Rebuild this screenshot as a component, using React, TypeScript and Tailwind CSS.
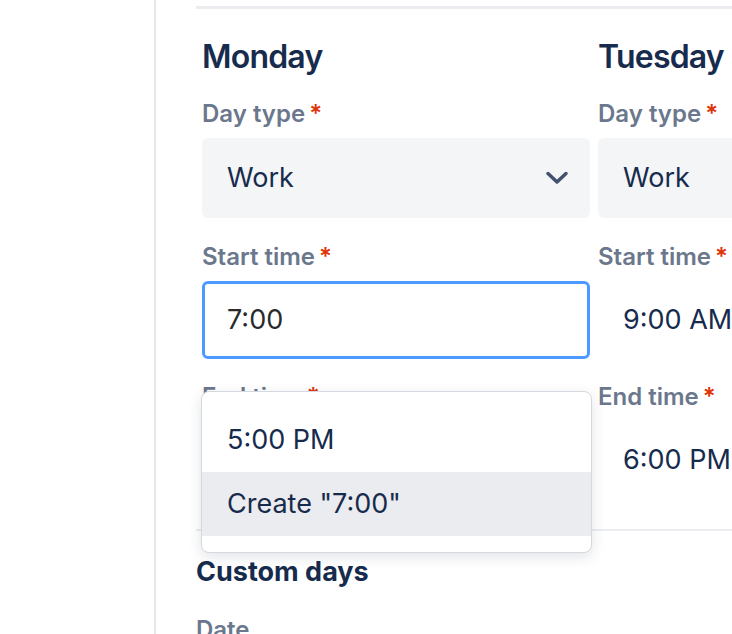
import React from 'react';

const font = { fontFamily: 'Inter, "Noto Sans", sans-serif' };

function Label({ text }: { text: string }) {
  return (
    <div className="h-[32px] mb-[8px] flex items-center text-[24px] font-semibold leading-[32px] text-[#6b778c]">
      {text}
      <span className="ml-[4px] text-[#de350b]">*</span>
    </div>
  );
}

function Chevron() {
  return (
    <svg width="24" height="24" viewBox="0 0 24 24" fill="none">
      <path d="M3 7.5 L12 16 L21 7.5" stroke="#42526e" strokeWidth="3.5" strokeLinecap="round" strokeLinejoin="round" />
    </svg>
  );
}

function DayColumn({ name, start, end, focused }: { name: string; start: string; end: string; focused?: boolean }) {
  return (
    <div className="w-[388px] shrink-0">
      <h2 className="mt-[2px] h-[48px] mb-[17px] text-[32px] leading-[48px] tracking-[-0.8px] font-semibold text-[#172b4d]">{name}</h2>

      {/* day type */}
      <Label text="Day type" />
      <div className="h-[80px] rounded-[6px] bg-[#f4f5f7] border-[3px] border-transparent pl-[22px] pr-[18px] flex items-center justify-between">
        <span className="text-[27px] text-[#172b4d]">Work</span>
        <Chevron />
      </div>

      {/* start time */}
      <div className="mt-[23px]">
        <Label text="Start time" />
        <div className="relative">
          {focused ? (
            <div className="h-[78px] rounded-[6px] bg-white border-[3px] border-[#4c9aff] pl-[22px] flex items-center">
              <span className="text-[27px] text-[#292a2e]">{start}</span>
            </div>
          ) : (
            <div className="h-[78px] rounded-[6px] border-[3px] border-transparent pl-[22px] flex items-center">
              <span className="text-[27px] text-[#172b4d] whitespace-nowrap">{start}</span>
            </div>
          )}
          {focused && (
            <div className="absolute z-10 top-[110px] left-[-1px] right-[-2px] rounded-[8px] bg-white border border-[#d5d8de] shadow-[0_4px_14px_rgba(9,30,66,0.12)] py-[16px] overflow-hidden">
              <div className="h-[64px] pl-[25px] flex items-center text-[27px] text-[#172b4d]">5:00 PM</div>
              <div className="h-[64px] pl-[25px] flex items-center text-[27px] text-[#172b4d] bg-[#ebecf0]">Create "7:00"</div>
            </div>
          )}
        </div>
      </div>

      {/* end time */}
      <div className="mt-[22px]">
        <Label text="End time" />
        <div className="h-[78px] rounded-[6px] border-[3px] border-transparent pl-[22px] flex items-center">
          <span className="text-[27px] text-[#172b4d] whitespace-nowrap">{end}</span>
        </div>
      </div>
    </div>
  );
}

export default function App() {
  return (
    <div className="w-[732px] h-[634px] overflow-hidden bg-white flex" style={font}>
      <div className="w-[154px] shrink-0" />
      <div className="w-[2px] shrink-0 bg-[#e6e7ea]" />
      <div className="flex-1 min-w-0 pl-[40px] pt-[6px]">
        <div className="h-[3px] bg-[#ebecf0]" />

        <div className="mt-[22px] px-[6px] flex gap-[8px]">
          <DayColumn name="Monday" start="7:00" end="" focused />
          <DayColumn name="Tuesday" start="9:00 AM" end="6:00 PM" />
        </div>

        <div className="mt-[30px] h-[2px] bg-[#ebecf0]" />

        <h3 className="mt-[23px] h-[36px] text-[27px] leading-[36px] font-bold text-[#172b4d]">Custom days</h3>
        <div className="mt-[24px] h-[32px] text-[24px] leading-[32px] font-semibold text-[#6b778c]">Date</div>
      </div>
    </div>
  );
}
